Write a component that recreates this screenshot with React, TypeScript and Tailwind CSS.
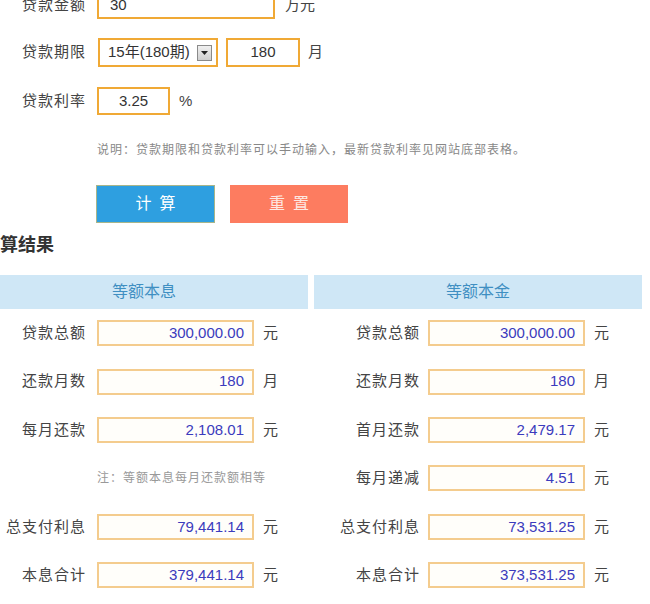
import React from "react";

const FONT = { fontFamily: '"Liberation Sans", "Noto Sans CJK SC", sans-serif' };

function ResultRow({
  label,
  value,
  unit,
  ml,
}: {
  label: string;
  value: string;
  unit: string;
  ml: string;
}) {
  return (
    <div className="flex items-center h-[48.4px]">
      <div className="w-[106px] text-right text-[15px] tracking-[1px] text-[#444] whitespace-nowrap">
        {label}
      </div>
      <div
        className={`${ml} w-[157px] h-[26px] border-2 border-[#f4cc8e] bg-[#fffefa] flex items-center justify-end pr-[8px] text-[15px] text-[#3b3bbd]`}
      >
        {value}
      </div>
      <div className="ml-[9px] text-[15px] text-[#444]">{unit}</div>
    </div>
  );
}

export default function App() {
  return (
    <div className="w-[650px] h-[604px] overflow-hidden bg-white" style={FONT}>
      <div className="-ml-[20px] -mt-[9px] w-[670px] flex flex-col">
        {/* Row 1 */}
        <div className="flex items-center h-[28px]">
          <div className="w-[106px] text-right text-[15px] tracking-[1px] text-[#444]">贷款金额</div>
          <div className="ml-[11px] w-[178px] h-[28px] border-2 border-[#f0a935] flex items-center pl-[11px] text-[15px] text-[#333]">
            30
          </div>
          <div className="ml-[10px] text-[15px] text-[#444]">万元</div>
        </div>
        {/* Row 2 */}
        <div className="flex items-center h-[29px] mt-[19px]">
          <div className="w-[106px] text-right text-[15px] tracking-[1px] text-[#444]">贷款期限</div>
          <div className="ml-[12px] w-[120px] h-[29px] border-2 border-[#f0a935] flex items-center pl-[8px] pr-[2px] text-[15px] text-[#333]">
            <span className="flex-1 whitespace-nowrap">15年(180期)</span>
            <span className="w-[15px] h-[16px] mr-[2px] border border-[#8a8a8a] bg-gradient-to-b from-[#f0f0f0] to-[#cfcfcf] flex items-center justify-center">
              <svg width="7" height="4" viewBox="0 0 7 4">
                <path d="M0 0 L7 0 L3.5 4 Z" fill="#222" />
              </svg>
            </span>
          </div>
          <div className="ml-[8px] w-[74px] h-[29px] border-2 border-[#f0a935] flex items-center justify-center text-[15px] text-[#333]">
            180
          </div>
          <div className="ml-[8px] text-[15px] text-[#444]">月</div>
        </div>
        {/* Row 3 */}
        <div className="flex items-center h-[28px] mt-[20px]">
          <div className="w-[106px] text-right text-[15px] tracking-[1px] text-[#444]">贷款利率</div>
          <div className="ml-[11px] w-[73px] h-[28px] border-2 border-[#f0a935] flex items-center justify-center text-[15px] text-[#333]">
            3.25
          </div>
          <div className="ml-[9px] text-[15px] text-[#444]">%</div>
        </div>
        {/* Note */}
        <div className="mt-[27px] h-[16px] leading-[16px] pl-[117px] text-[12px] tracking-[1px] text-[#888] whitespace-nowrap">
          说明：贷款期限和贷款利率可以手动输入，最新贷款利率见网站底部表格。
        </div>
        {/* Buttons */}
        <div className="mt-[27px] flex pl-[116px]">
          <div className="w-[119px] h-[38px] bg-[#2e9fe0] border border-[#a8b58a] flex items-center justify-center text-white text-[16px] tracking-[8px] pl-[8px]">
            计算
          </div>
          <div className="ml-[15px] w-[118px] h-[38px] bg-[#fd7c60] flex items-center justify-center text-[#fde8e2] text-[16px] tracking-[8px] pl-[8px]">
            重置
          </div>
        </div>
        {/* Heading */}
        <div className="mt-[10px] h-[24px] leading-[24px] ml-[2px] text-[18px] font-bold text-[#333]">
          计算结果
        </div>
        {/* Results */}
        <div className="mt-[18px] grid grid-cols-[328px_328px] gap-x-[6px]">
          <div className="flex flex-col">
            <div className="h-[34px] bg-[#cfe7f6] flex items-center justify-center text-[16px] text-[#3f8fc2]">
              等额本息
            </div>
            <ResultRow label="贷款总额" value="300,000.00" unit="元" ml="ml-[11px]" />
            <ResultRow label="还款月数" value="180" unit="月" ml="ml-[11px]" />
            <ResultRow label="每月还款" value="2,108.01" unit="元" ml="ml-[11px]" />
            <div className="h-[48.4px] flex items-center pl-[117px] text-[12px] tracking-[1px] text-[#999] whitespace-nowrap">
              注：等额本息每月还款额相等
            </div>
            <ResultRow label="总支付利息" value="79,441.14" unit="元" ml="ml-[11px]" />
            <ResultRow label="本息合计" value="379,441.14" unit="元" ml="ml-[11px]" />
          </div>
          <div className="flex flex-col">
            <div className="h-[34px] bg-[#cfe7f6] flex items-center justify-center text-[16px] text-[#3f8fc2]">
              等额本金
            </div>
            <ResultRow label="贷款总额" value="300,000.00" unit="元" ml="ml-[8px]" />
            <ResultRow label="还款月数" value="180" unit="月" ml="ml-[8px]" />
            <ResultRow label="首月还款" value="2,479.17" unit="元" ml="ml-[8px]" />
            <ResultRow label="每月递减" value="4.51" unit="元" ml="ml-[8px]" />
            <ResultRow label="总支付利息" value="73,531.25" unit="元" ml="ml-[8px]" />
            <ResultRow label="本息合计" value="373,531.25" unit="元" ml="ml-[8px]" />
          </div>
        </div>
      </div>
    </div>
  );
}
